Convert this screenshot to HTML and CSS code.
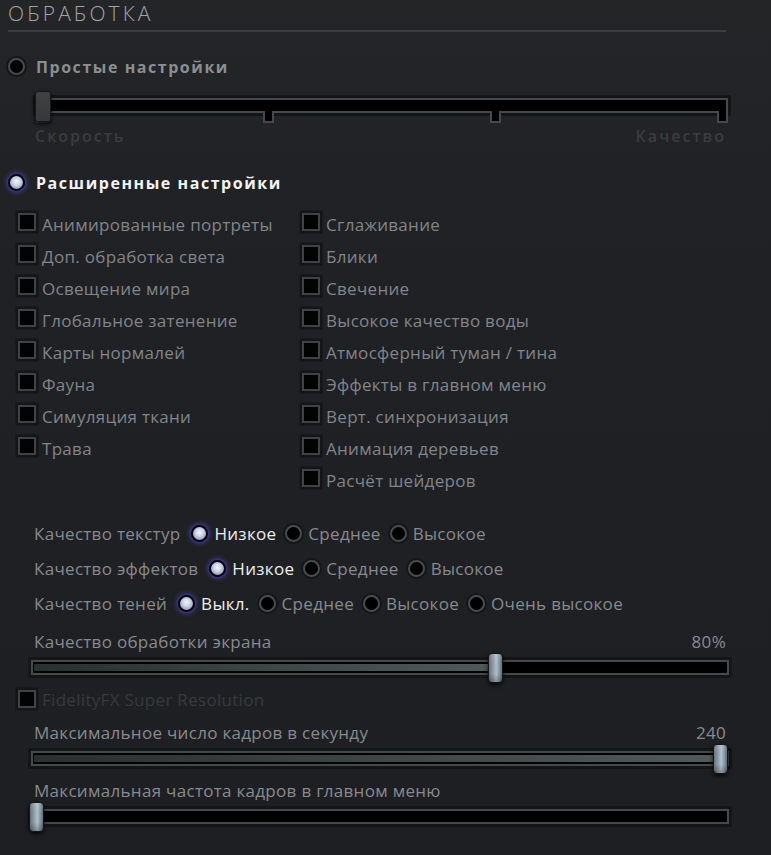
FILE: index.html
```html
<!DOCTYPE html>
<html lang="ru">
<head>
<meta charset="utf-8">
<title>Обработка</title>
<link rel="stylesheet" href="styles.css">
</head>
<body>
<div class="panel">
  <h1 class="title">ОБРАБОТКА</h1>
  <div class="rule"></div>

  <div class="mode mode-simple">
    <span class="radio"></span>
    <span class="mode-text">Простые настройки</span>
  </div>

  <div class="slider steps">
    <div class="track"><div class="track-in"></div></div>
    <span class="tick" style="left:3px"></span>
    <span class="tick" style="left:230px"></span>
    <span class="tick" style="left:457px"></span>
    <span class="tick" style="left:684px"></span>
    <span class="knob knob-dark" style="left:2px"></span>
  </div>
  <div class="step-labels"><span>Скорость</span><span>Качество</span></div>

  <div class="mode mode-adv">
    <span class="radio on"></span>
    <span class="mode-text">Расширенные настройки</span>
  </div>

  <div class="checks">
    <div class="col col-left">
      <div class="check"><span class="box"></span><span class="check-text">Анимированные портреты</span></div>
      <div class="check"><span class="box"></span><span class="check-text">Доп. обработка света</span></div>
      <div class="check"><span class="box"></span><span class="check-text">Освещение мира</span></div>
      <div class="check"><span class="box"></span><span class="check-text">Глобальное затенение</span></div>
      <div class="check"><span class="box"></span><span class="check-text">Карты нормалей</span></div>
      <div class="check"><span class="box"></span><span class="check-text">Фауна</span></div>
      <div class="check"><span class="box"></span><span class="check-text">Симуляция ткани</span></div>
      <div class="check"><span class="box"></span><span class="check-text">Трава</span></div>
    </div>
    <div class="col">
      <div class="check"><span class="box"></span><span class="check-text">Сглаживание</span></div>
      <div class="check"><span class="box"></span><span class="check-text">Блики</span></div>
      <div class="check"><span class="box"></span><span class="check-text">Свечение</span></div>
      <div class="check"><span class="box"></span><span class="check-text">Высокое качество воды</span></div>
      <div class="check"><span class="box"></span><span class="check-text">Атмосферный туман / тина</span></div>
      <div class="check"><span class="box"></span><span class="check-text">Эффекты в главном меню</span></div>
      <div class="check"><span class="box"></span><span class="check-text">Верт. синхронизация</span></div>
      <div class="check"><span class="box"></span><span class="check-text">Анимация деревьев</span></div>
      <div class="check"><span class="box"></span><span class="check-text">Расчёт шейдеров</span></div>
    </div>
  </div>

  <div class="quality">
    <div class="q-row">
      <span class="q-label">Качество текстур</span>
      <span class="opt"><span class="radio on"></span><span class="opt-text sel">Низкое</span></span>
      <span class="opt"><span class="radio"></span><span class="opt-text">Среднее</span></span>
      <span class="opt"><span class="radio"></span><span class="opt-text">Высокое</span></span>
    </div>
    <div class="q-row">
      <span class="q-label">Качество эффектов</span>
      <span class="opt"><span class="radio on"></span><span class="opt-text sel">Низкое</span></span>
      <span class="opt"><span class="radio"></span><span class="opt-text">Среднее</span></span>
      <span class="opt"><span class="radio"></span><span class="opt-text">Высокое</span></span>
    </div>
    <div class="q-row">
      <span class="q-label">Качество теней</span>
      <span class="opt"><span class="radio on"></span><span class="opt-text sel">Выкл.</span></span>
      <span class="opt"><span class="radio"></span><span class="opt-text">Среднее</span></span>
      <span class="opt"><span class="radio"></span><span class="opt-text">Высокое</span></span>
      <span class="opt"><span class="radio"></span><span class="opt-text">Очень высокое</span></span>
    </div>
  </div>

  <div class="range-label range-first"><span>Качество обработки экрана</span><span>80%</span></div>
  <div class="slider wide">
    <div class="track"><div class="track-in"><div class="fill" style="width:462px"></div></div></div>
    <span class="knob" style="left:460px"></span>
  </div>

  <div class="check check-dim"><span class="box"></span><span class="check-text">FidelityFX Super Resolution</span></div>

  <div class="range-label range-fps"><span>Максимальное число кадров в секунду</span><span>240</span></div>
  <div class="slider wide">
    <div class="track"><div class="track-in"><div class="fill" style="width:690px"></div></div></div>
    <span class="knob" style="left:685px"></span>
  </div>

  <div class="range-label range-menu"><span>Максимальная частота кадров в главном меню</span></div>
  <div class="slider wide">
    <div class="track"><div class="track-in"></div></div>
    <span class="knob" style="left:1px"></span>
  </div>
</div>
</body>
</html>
```
FILE: styles.css
```css
html, body {
  margin: 0;
  padding: 0;
}
body {
  background: linear-gradient(to bottom, #242527 0px, #202124 260px, #1e1f22 855px);
  font-family: "Open Sans", "Noto Sans", sans-serif;
  color: #878b8f;
  width: 771px;
  height: 855px;
  overflow: hidden;
}
.panel {
  width: 771px;
  height: 855px;
}
.title {
  margin: 0;
  padding-left: 8px;
  font-size: 21px;
  line-height: 26px;
  font-weight: 300;
  letter-spacing: 3.1px;
  color: #a0a4a7;
}
.rule {
  margin: 4px 0 0 8px;
  width: 718px;
  height: 2px;
  background: #3c3d40;
}

/* radio buttons */
.radio {
  flex: none;
  box-sizing: border-box;
  width: 17px;
  height: 17px;
  margin: 2px;
  border-radius: 50%;
  background: #000;
  border: 2px solid #474d4e;
  box-shadow: 0 0 0 2px #151618;
}
.radio.on {
  border: 2px solid #06060a;
  background: radial-gradient(circle at 50% 42%, #f4f6fc 0%, #cdd4e6 38%, #8e98b6 80%, #6f7896 100%);
  box-shadow: 0 0 0 1.5px #34327a, 0 0 4px 2px rgba(80, 76, 190, 0.55);
}

.mode {
  display: flex;
  align-items: flex-start;
  height: 22px;
  padding-left: 6px;
}
.mode-simple { margin-top: 23px; }
.mode-adv { margin-top: 25px; }
.mode .radio { margin-top: 2.5px; }
.mode-text {
  margin-left: 9px;
  padding-top: 1px;
  font-size: 16px;
  line-height: 22px;
  font-weight: 700;
  letter-spacing: 1.55px;
  color: #8a8f93;
  white-space: nowrap;
}
.mode-adv .mode-text { color: #f2f3f5; }

/* sliders */
.slider {
  position: relative;
  box-sizing: border-box;
  height: 30px;
  padding-top: 4px;
}
.steps {
  margin: 14px 0 0 33px;
  width: 698px;
  height: 32px;
}
.wide {
  margin-left: 28px;
  width: 704px;
}
.track {
  box-sizing: border-box;
  height: 21px;
  padding: 3px;
  background: #141517;
  border-radius: 2px;
}
.track-in {
  box-sizing: border-box;
  height: 15px;
  border: 2px solid #434a4a;
  background: #000;
  padding: 2px 1px;
}
.fill {
  height: 7px;
  background: linear-gradient(to right, #2a2f2f 0%, #3d4545 50%, #505a5a 100%);
  border-radius: 1px;
}
.tick {
  position: absolute;
  top: 20px;
  box-sizing: border-box;
  width: 11px;
  height: 12px;
  background: #000;
  border: 2px solid #434a4a;
  border-top: none;
}
.knob {
  position: absolute;
  top: 0;
  box-sizing: border-box;
  width: 15px;
  height: 30px;
  border-radius: 4px;
  border: 1px solid #15161a;
  background:
    linear-gradient(to bottom, rgba(255,255,255,0.10) 0%, rgba(0,0,0,0) 30%, rgba(0,0,0,0) 70%, rgba(0,0,0,0.25) 100%),
    linear-gradient(to right, #66737d 0%, #9aa8b3 40%, #b3c0ca 55%, #8896a0 80%, #5f6b74 100%);
  box-shadow: 0 2px 4px rgba(0, 0, 0, 0.8);
}
.knob-dark {
  width: 16px;
  height: 31px;
  border-radius: 3px;
  background: linear-gradient(to bottom, #404143 0%, #37383a 100%);
  border: 1px solid #17181a;
}
.step-labels {
  display: flex;
  justify-content: space-between;
  margin: 3px 0 0 35px;
  width: 691px;
  font-size: 16px;
  line-height: 20px;
  font-weight: 600;
  letter-spacing: 2px;
  color: #3a3c3f;
}

/* checkboxes */
.checks {
  display: flex;
  margin: 13px 0 0 16px;
}
.col {
  display: flex;
  flex-direction: column;
}
.col-left { width: 284px; }
.check {
  display: flex;
  align-items: center;
  height: 32px;
}
.box {
  flex: none;
  box-sizing: border-box;
  width: 18px;
  height: 18px;
  margin: 2px;
  background: #030303;
  border: 2px solid #3e4345;
  box-shadow: 0 0 0 2.5px #141517;
}
.check-text {
  margin-left: 4px;
  box-sizing: border-box;
  height: 32px;
  padding-top: 6px;
  font-size: 17px;
  line-height: 26px;
  letter-spacing: 0.3px;
  color: #80858a;
  white-space: nowrap;
}
.check-dim {
  margin-left: 16px;
}
.check-dim .check-text {
  color: #37393c;
  padding-top: 4px;
}

/* quality radio rows */
.quality {
  margin: 22px 0 0 34px;
}
.q-row {
  display: flex;
  align-items: center;
  height: 35px;
  font-size: 17px;
  line-height: 35px;
  letter-spacing: 0.3px;
  white-space: nowrap;
}
.q-label {
  margin-right: 9px;
  color: #868a8e;
}
.opt {
  display: flex;
  align-items: center;
  margin-right: 7px;
}
.opt-text {
  margin-left: 4px;
  color: #868a8e;
}
.opt-text.sel { color: #eceef0; }

/* labelled ranges */
.range-label {
  display: flex;
  justify-content: space-between;
  margin-left: 34px;
  width: 692px;
  font-size: 17px;
  line-height: 22px;
  letter-spacing: 0.3px;
  color: #878b8f;
  white-space: nowrap;
}
.range-first { margin-top: 10px; }
.range-fps { margin-top: 7px; }
.range-menu { margin-top: 6px; }
```
